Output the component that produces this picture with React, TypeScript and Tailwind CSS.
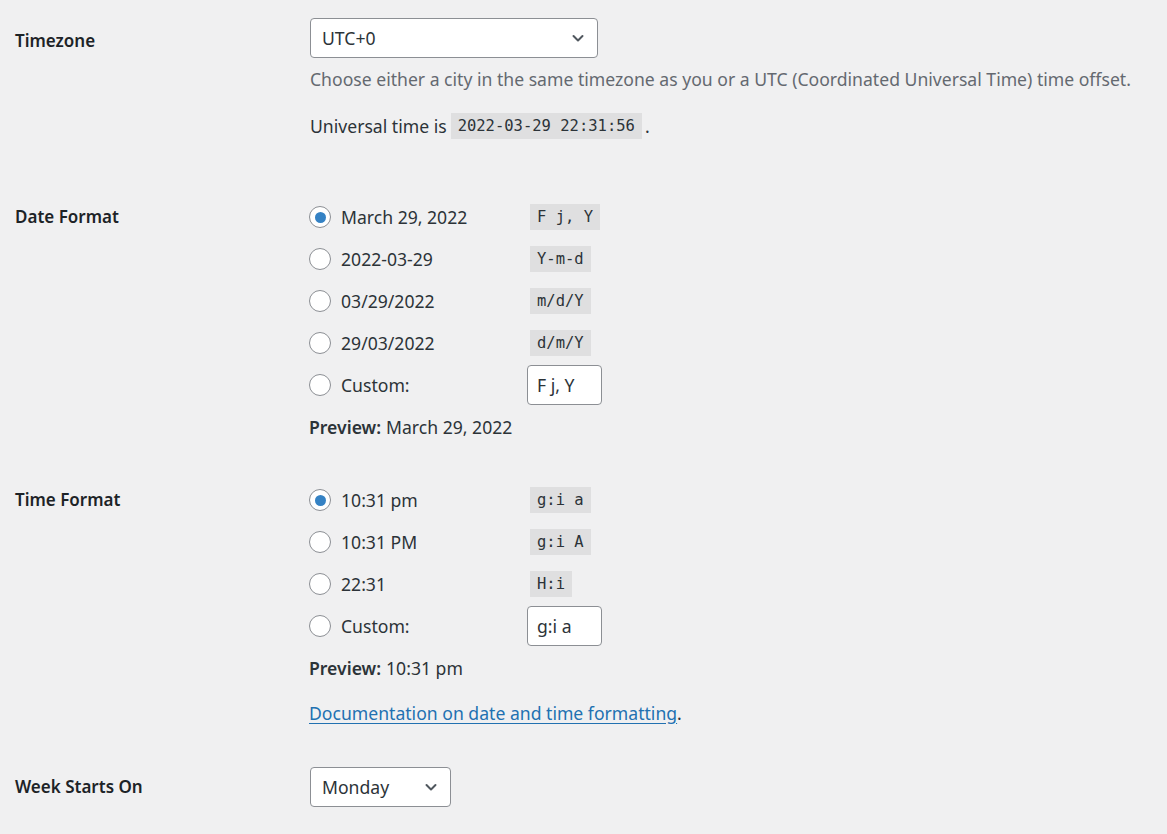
import React from "react";

const sans = { fontFamily: '"Noto Sans", "Open Sans", sans-serif' };

function Chevron() {
  return (
    <svg width="16" height="16" viewBox="0 0 16 16" fill="none" className="shrink-0">
      <path d="M3.5 6 L8 10.5 L12.5 6" stroke="#50575e" strokeWidth="2" strokeLinecap="round" strokeLinejoin="round" />
    </svg>
  );
}

function Select({ value, width }: { value: string; width: string }) {
  return (
    <div className={`${width} h-[40px] bg-white border border-[#8c8f94] rounded-[4px] flex items-center justify-between pl-[11px] pr-[11px] text-[#2c3338]`}>
      <span>{value}</span>
      <Chevron />
    </div>
  );
}

function Code({ children }: { children: React.ReactNode }) {
  return (
    <code
      className="inline-flex items-center h-[26px] px-[7px] bg-[#dfdfe0] text-[#2c3338] text-[15.5px]"
      style={{ fontFamily: '"DejaVu Sans Mono", "Liberation Mono", monospace' }}
    >
      {children}
    </code>
  );
}

function Radio({ checked }: { checked?: boolean }) {
  return (
    <span className="w-[22px] h-[22px] rounded-full border border-[#8c8f94] bg-white flex items-center justify-center shrink-0">
      {checked && <span className="w-[11px] h-[11px] rounded-full bg-[#3582c4]" />}
    </span>
  );
}

function FormatRow({ label, code, checked }: { label: string; code: string; checked?: boolean }) {
  return (
    <div className="h-[42px] flex items-center">
      <Radio checked={checked} />
      <span className="w-[189px] ml-[10px] text-[#2c3338]">{label}</span>
      <Code>{code}</Code>
    </div>
  );
}

function CustomRow({ value }: { value: string }) {
  return (
    <div className="h-[42px] flex items-center">
      <Radio />
      <span className="w-[186px] ml-[10px] text-[#2c3338]">Custom:</span>
      <div className="w-[75px] h-[40px] bg-white border border-[#8c8f94] rounded-[4px] flex items-center px-[9px] text-[#2c3338]">
        {value}
      </div>
    </div>
  );
}

function Preview({ value }: { value: string }) {
  return (
    <div className="h-[42px] flex items-center text-[#2c3338]">
      <span className="font-semibold mr-[5px]">Preview:</span>
      <span>{value}</span>
    </div>
  );
}

function Label({ children }: { children: React.ReactNode }) {
  return <div className="font-semibold text-[#1d2327] h-[42px] flex items-center">{children}</div>;
}

export default function App() {
  return (
    <div className="min-h-[834px] w-full bg-[#f0f0f1] text-[17.6px] leading-[24px] pl-[15px]" style={sans}>
      {/* Timezone */}
      <div className="grid grid-cols-[294px_1fr] pt-[18px]">
        <div className="h-[40px] mt-[3px] flex items-center font-semibold text-[#1d2327] text-[17px]">Timezone</div>
        <div className="pl-[1px]">
          <Select value="UTC+0" width="w-[288px]" />
          <p className="mt-[9px] text-[#646970]">
            Choose either a city in the same timezone as you or a UTC (Coordinated Universal Time) time offset.
          </p>
          <p className="mt-[21px] h-[28px] flex items-center text-[#2c3338]">
            <span className="mr-[4px]">Universal time is</span>
            <Code>2022-03-29 22:31:56</Code>
            <span className="ml-[3px]">.</span>
          </p>
        </div>
      </div>

      {/* Date format */}
      <div className="grid grid-cols-[294px_1fr] mt-[56px]">
        <div className="text-[17px]">
          <Label>Date Format</Label>
        </div>
        <div>
          <FormatRow label="March 29, 2022" code="F j, Y" checked />
          <FormatRow label="2022-03-29" code="Y-m-d" />
          <FormatRow label="03/29/2022" code="m/d/Y" />
          <FormatRow label="29/03/2022" code="d/m/Y" />
          <CustomRow value="F j, Y" />
          <Preview value="March 29, 2022" />
        </div>
      </div>

      {/* Time format */}
      <div className="grid grid-cols-[294px_1fr] mt-[31px]">
        <div className="text-[17px]">
          <Label>Time Format</Label>
        </div>
        <div>
          <FormatRow label="10:31 pm" code="g:i a" checked />
          <FormatRow label="10:31 PM" code="g:i A" />
          <FormatRow label="22:31" code="H:i" />
          <CustomRow value="g:i a" />
          <Preview value="10:31 pm" />
          <div className="h-[42px] mt-[3px] flex items-center text-[#2c3338]">
            <a className="text-[#2271b1] underline underline-offset-[3px]" href="#">
              Documentation on date and time formatting
            </a>
            <span>.</span>
          </div>
        </div>
      </div>

      {/* Week start */}
      <div className="grid grid-cols-[294px_1fr] mt-[33px] pb-[28px]">
        <div className="h-[40px] flex items-center font-semibold text-[#1d2327] text-[17px]">Week Starts On</div>
        <div className="pl-[1px]">
          <Select value="Monday" width="w-[141px]" />
        </div>
      </div>
    </div>
  );
}
